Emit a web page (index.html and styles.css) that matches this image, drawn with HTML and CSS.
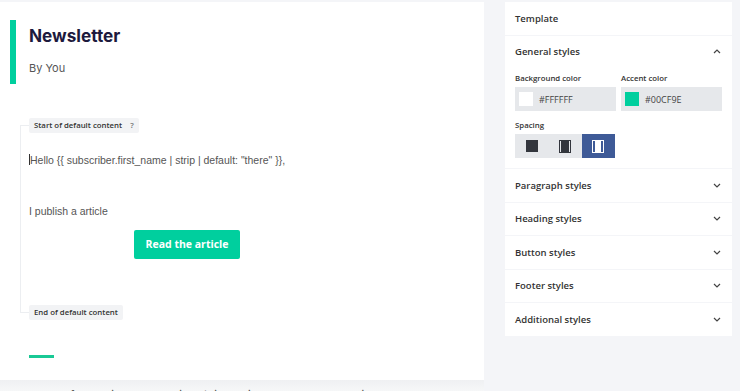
FILE: index.html
```html
<!DOCTYPE html>
<html lang="en">

<head>
    <meta charset="UTF-8">
    <meta name="viewport" content="width=device-width, initial-scale=1.0">
    <title>Newsletter template</title>
    <link rel="stylesheet" href="styles.css">
</head>

<body>
    <main class="canvas">
        <div class="header">
            <h1 class="title">Newsletter</h1>
            <p class="byline">By You</p>
        </div>

        <div class="default-block">
            <span class="chip">Start of default content <span class="help">?</span></span>
            <div class="email-body">
                <p class="greeting"><span class="caret"></span>Hello {{ subscriber.first_name | strip | default: "there" }},</p>
                <p class="line">I publish a article</p>
                <div class="cta-row">
                    <a class="cta" href="#">Read the article</a>
                </div>
            </div>
            <span class="chip">End of default content</span>
        </div>

        <div class="accent-line"></div>

        <footer class="email-footer">
            Thanks for reading! You received this email because you subscribed.
        </footer>
    </main>

    <aside class="sidebar">
        <section class="card">
            <div class="card-head">Template</div>
        </section>

        <section class="card">
            <div class="card-head">
                General styles
                <svg class="chevron" width="8" height="5" viewBox="0 0 8 5"><path d="M1 4 L4 1 L7 4" fill="none" stroke="#444" stroke-width="1.2"/></svg>
            </div>
            <div class="card-body">
                <div class="fields">
                    <div class="field">
                        <label class="label">Background color</label>
                        <div class="color-input">
                            <span class="swatch swatch-white"></span>
                            <span>#FFFFFF</span>
                        </div>
                    </div>
                    <div class="field">
                        <label class="label">Accent color</label>
                        <div class="color-input">
                            <span class="swatch swatch-green"></span>
                            <span>#00CF9E</span>
                        </div>
                    </div>
                </div>
                <label class="label">Spacing</label>
                <div class="segmented">
                    <button class="seg">
                        <svg width="12" height="12" viewBox="0 0 12 12"><rect x="0" y="0" width="12" height="12" fill="#33363d"/></svg>
                    </button>
                    <button class="seg">
                        <svg width="12" height="13" viewBox="0 0 12 13"><rect x="0.5" y="0.5" width="11" height="12" fill="none" stroke="#33363d"/><rect x="2" y="0.5" width="8" height="12" fill="#33363d"/></svg>
                    </button>
                    <button class="seg active">
                        <svg width="12" height="13" viewBox="0 0 12 13"><rect x="0.5" y="0.5" width="11" height="12" fill="none" stroke="#fff"/><rect x="3" y="0.5" width="6" height="12" fill="#fff"/></svg>
                    </button>
                </div>
            </div>
        </section>

        <section class="card">
            <div class="card-head">Paragraph styles
                <svg class="chevron" width="8" height="5" viewBox="0 0 8 5"><path d="M1 1 L4 4 L7 1" fill="none" stroke="#444" stroke-width="1.2"/></svg>
            </div>
        </section>
        <section class="card">
            <div class="card-head">Heading styles
                <svg class="chevron" width="8" height="5" viewBox="0 0 8 5"><path d="M1 1 L4 4 L7 1" fill="none" stroke="#444" stroke-width="1.2"/></svg>
            </div>
        </section>
        <section class="card">
            <div class="card-head">Button styles
                <svg class="chevron" width="8" height="5" viewBox="0 0 8 5"><path d="M1 1 L4 4 L7 1" fill="none" stroke="#444" stroke-width="1.2"/></svg>
            </div>
        </section>
        <section class="card">
            <div class="card-head">Footer styles
                <svg class="chevron" width="8" height="5" viewBox="0 0 8 5"><path d="M1 1 L4 4 L7 1" fill="none" stroke="#444" stroke-width="1.2"/></svg>
            </div>
        </section>
        <section class="card">
            <div class="card-head">Additional styles
                <svg class="chevron" width="8" height="5" viewBox="0 0 8 5"><path d="M1 1 L4 4 L7 1" fill="none" stroke="#444" stroke-width="1.2"/></svg>
            </div>
        </section>
    </aside>
</body>

</html>
```

FILE: styles.css
```css
body {
    margin: 0;
    padding: 0;
    display: flex;
    height: 391px;
    overflow: hidden;
    background: #f4f5f8;
    font-family: "Open Sans", sans-serif;
}

p {
    margin: 0;
}

.canvas {
    width: 484px;
    margin-top: 2px;
    background: #fff;
    display: flex;
    flex-direction: column;
}

.header {
    margin: 18px 0 0 10px;
    height: 64px;
    border-left: 6px solid #00cf9e;
    padding: 5px 0 0 13px;
    box-sizing: border-box;
}

.title {
    margin: 0;
    font-family: Inter, sans-serif;
    font-size: 17.2px;
    line-height: 22px;
    font-weight: 700;
    color: #1d1a3d;
}

.byline {
    margin-top: 14px;
    font-family: Inter, sans-serif;
    font-size: 11px;
    line-height: 14px;
    color: #555;
}

.default-block {
    position: relative;
    margin: 34px 0 0 20px;
    padding-left: 9px;
    display: flex;
    flex-direction: column;
    align-items: flex-start;
}

/* bracket line down the left side */
.default-block::before {
    content: "";
    position: absolute;
    left: 0;
    top: 7px;
    bottom: 7px;
    width: 9px;
    border: 1px solid #eceef1;
    border-right: none;
}

.chip {
    position: relative;
    background: #f2f3f5;
    color: #333;
    font-size: 7.8px;
    font-weight: 600;
    line-height: 9px;
    padding: 3px 5px;
    border-radius: 2px;
}

.help {
    margin-left: 6px;
    color: #777;
}

.email-body {
    width: 316px;
    padding: 20px 0 46px;
}

.greeting,
.line {
    font-family: "Liberation Sans", Arial, sans-serif;
    font-size: 10.5px;
    line-height: 14px;
    color: #555;
}

.caret {
    display: inline-block;
    width: 1px;
    height: 11px;
    background: #333;
    vertical-align: -1px;
}

.line {
    margin-top: 37px;
}

.cta-row {
    margin-top: 12px;
    text-align: center;
}

.cta {
    display: inline-block;
    width: 106px;
    height: 29px;
    line-height: 29px;
    background: #00cf9e;
    color: #fff;
    border-radius: 2px;
    font-size: 10.5px;
    font-weight: 700;
    text-decoration: none;
}

.accent-line {
    margin: 35px 0 0 29px;
    width: 25px;
    height: 3px;
    background: #19c995;
}

.email-footer {
    margin-top: 22px;
    flex: 1;
    background: linear-gradient(#eff0f2, #f6f7f8);
    padding: 8px 29px 0;
    font-family: Inter, sans-serif;
    font-size: 11px;
    line-height: 14px;
    color: #555;
    white-space: nowrap;
    overflow: hidden;
}

.sidebar {
    flex: 1;
    padding: 2px 8px 0 21px;
}

.card {
    background: #fff;
    margin-bottom: 1px;
}

.card-head {
    height: 32.5px;
    padding: 0 10px;
    display: flex;
    align-items: center;
    justify-content: space-between;
    font-size: 9.5px;
    font-weight: 600;
    color: #333;
}

.chevron {
    margin-right: 1px;
}

.card-body {
    padding: 5px 10px 10px;
}

.fields {
    display: flex;
    gap: 5px;
}

.field {
    flex: 1;
}

.label {
    display: block;
    font-size: 7.8px;
    font-weight: 600;
    line-height: 10px;
    color: #333;
    margin-bottom: 4px;
}

.color-input {
    height: 24px;
    background: #e6e8eb;
    display: flex;
    align-items: center;
    padding-left: 4px;
    gap: 6px;
    font-size: 9px;
    color: #444;
    margin-bottom: 9px;
}

.swatch {
    width: 14px;
    height: 14px;
}

.swatch-white {
    background: #fff;
}

.swatch-green {
    background: #00cf9e;
}

.segmented {
    display: flex;
    width: 100px;
    height: 24px;
    background: #e6e8eb;
}

.seg {
    flex: 1;
    border: none;
    padding: 0;
    background: transparent;
    display: flex;
    align-items: center;
    justify-content: center;
    cursor: pointer;
}

.seg.active {
    background: #3e5a97;
}
```
